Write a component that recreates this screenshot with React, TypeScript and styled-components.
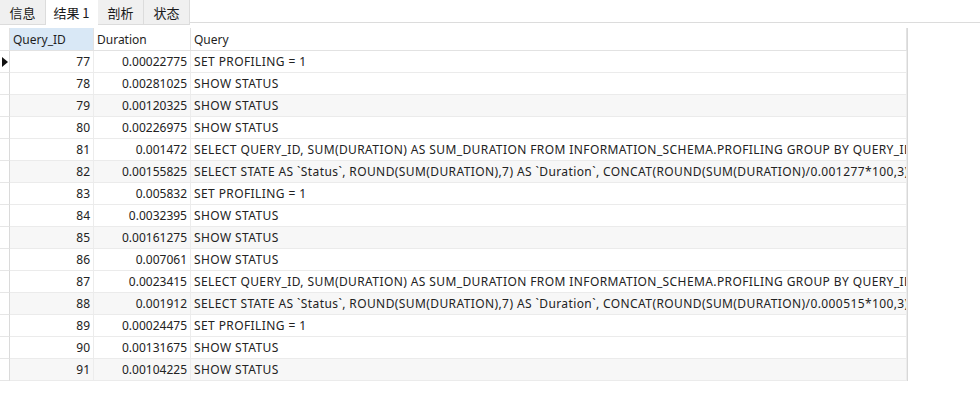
import React, { FC } from "react";
import styled, { createGlobalStyle } from "styled-components";

const GlobalStyle = createGlobalStyle`
  html, body {
    margin: 0;
    padding: 0;
    background: #ffffff;
  }
  body {
    font-family: "Noto Sans", "Noto Sans CJK SC", sans-serif;
    color: #222222;
  }
`;

const Page = styled.div`
  width: 980px;
  height: 414px;
  overflow: hidden;
  background: #fff;
`;

const TabBar = styled.div`
  display: flex;
  height: 25px;
  align-items: stretch;
`;

const Tab = styled.div<{ $active?: boolean }>`
  display: flex;
  align-items: center;
  justify-content: center;
  width: ${(p) => (p.$active ? 52 : 46)}px;
  font-family: "Noto Sans CJK SC", sans-serif;
  font-size: 13px;
  color: #1a1a1a;
  background: ${(p) => (p.$active ? "#ffffff" : "#f0f0f0")};
  border-right: 1px solid ${(p) => (p.$active ? "transparent" : "#dcdcdc")};
  border-bottom: 1px solid ${(p) => (p.$active ? "transparent" : "#dcdcdc")};
  box-sizing: border-box;
`;

const TabFill = styled.div`
  flex: 1;
  border-bottom: 1px solid #dcdcdc;
  margin-bottom: 2px;
`;

const Grid = styled.div`
  margin-top: 3px;
  width: 907px;
  display: grid;
  grid-template-columns: 10px 84px 97px 716px;
  border-right: 1px solid #d8d8d8;
  font-size: 12px;
`;

const HeadCell = styled.div<{ $selected?: boolean }>`
  height: 23px;
  box-sizing: border-box;
  display: flex;
  align-items: center;
  padding-left: 3px;
  background: ${(p) => (p.$selected ? "#d9e8f6" : "#ffffff")};
  border-right: 1px solid #e2e2e2;
  border-bottom: 1px solid #e2e2e2;
  color: #1e1e1e;
  white-space: nowrap;
`;

const Gutter = styled.div`
  height: 22px;
  box-sizing: border-box;
  border-right: 1px solid #dadada;
  border-bottom: 1px solid #e6e6e6;
  display: flex;
  align-items: center;
`;

const Cell = styled.div<{ $num?: boolean; $shade?: boolean; $text?: boolean }>`
  height: 22px;
  box-sizing: border-box;
  display: flex;
  align-items: center;
  justify-content: ${(p) => (p.$num ? "flex-end" : "flex-start")};
  padding: 0 3px;
  background: ${(p) => (p.$shade ? "#f7f7f7" : "#ffffff")};
  border-right: 1px solid #ececec;
  border-bottom: 1px solid #ebebeb;
  white-space: nowrap;
  overflow: hidden;
  letter-spacing: ${(p) => (p.$text ? "0.4px" : "0")};
  color: #222;
`;

const Arrow = styled.span`
  width: 0;
  height: 0;
  margin-left: 2px;
  border-top: 5px solid transparent;
  border-bottom: 5px solid transparent;
  border-left: 6px solid #111;
`;

const rows: [number, string, string][] = [
  [77, "0.00022775", "SET PROFILING = 1"],
  [78, "0.00281025", "SHOW STATUS"],
  [79, "0.00120325", "SHOW STATUS"],
  [80, "0.00226975", "SHOW STATUS"],
  [81, "0.001472", "SELECT QUERY_ID, SUM(DURATION) AS SUM_DURATION FROM INFORMATION_SCHEMA.PROFILING GROUP BY QUERY_ID"],
  [82, "0.00155825", "SELECT STATE AS `Status`, ROUND(SUM(DURATION),7) AS `Duration`, CONCAT(ROUND(SUM(DURATION)/0.001277*100,3), '%') AS `Percentage`"],
  [83, "0.005832", "SET PROFILING = 1"],
  [84, "0.0032395", "SHOW STATUS"],
  [85, "0.00161275", "SHOW STATUS"],
  [86, "0.007061", "SHOW STATUS"],
  [87, "0.0023415", "SELECT QUERY_ID, SUM(DURATION) AS SUM_DURATION FROM INFORMATION_SCHEMA.PROFILING GROUP BY QUERY_ID"],
  [88, "0.001912", "SELECT STATE AS `Status`, ROUND(SUM(DURATION),7) AS `Duration`, CONCAT(ROUND(SUM(DURATION)/0.000515*100,3), '%') AS `Percentage`"],
  [89, "0.00024475", "SET PROFILING = 1"],
  [90, "0.00131675", "SHOW STATUS"],
  [91, "0.00104225", "SHOW STATUS"],
];

const App: FC = () => {
  return (
    <Page>
      <GlobalStyle />
      <TabBar>
        <Tab>信息</Tab>
        <Tab $active>结果 1</Tab>
        <Tab>剖析</Tab>
        <Tab>状态</Tab>
        <TabFill />
      </TabBar>
      <Grid>
        <HeadCell />
        <HeadCell $selected>Query_ID</HeadCell>
        <HeadCell>Duration</HeadCell>
        <HeadCell>Query</HeadCell>
        {rows.map(([id, dur, query], i) => {
          const shade = i % 3 === 2;
          return (
            <React.Fragment key={id}>
              <Gutter>{i === 0 && <Arrow />}</Gutter>
              <Cell $num $shade={shade}>{id}</Cell>
              <Cell $num $shade={shade}>{dur}</Cell>
              <Cell $text $shade={shade}>{query}</Cell>
            </React.Fragment>
          );
        })}
      </Grid>
    </Page>
  );
};

export default App;
